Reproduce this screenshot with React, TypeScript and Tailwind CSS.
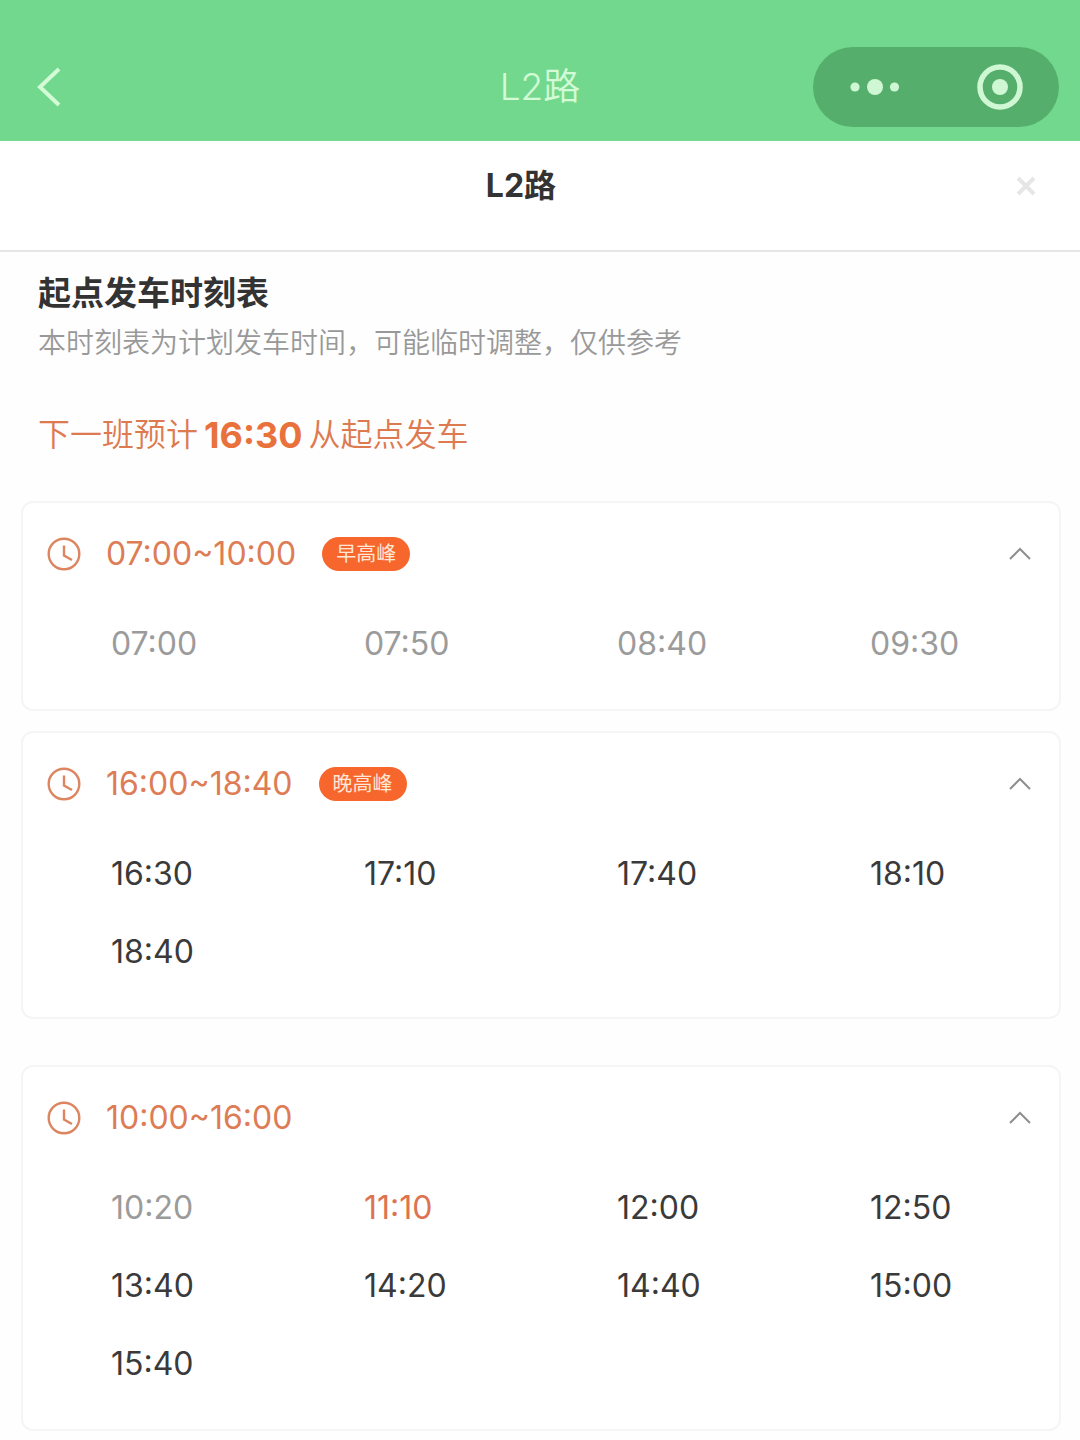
import { useState } from "react"
import clsx from "clsx"

type Status = "past" | "next" | "upcoming"

interface Departure {
    time: string
    status: Status
}

interface Period {
    range: string
    tag?: string
    departures: Departure[]
}

const toDepartures = (status: Status, times: string[]): Departure[] =>
    times.map((time) => ({ time, status }))

const peakPeriods: Period[] = [
    {
        range: "07:00~10:00",
        tag: "早高峰",
        departures: toDepartures("past", ["07:00", "07:50", "08:40", "09:30"]),
    },
    {
        range: "16:00~18:40",
        tag: "晚高峰",
        departures: toDepartures("upcoming", ["16:30", "17:10", "17:40", "18:10", "18:40"]),
    },
]

const offPeakPeriods: Period[] = [
    {
        range: "10:00~16:00",
        departures: [
            { time: "10:20", status: "past" },
            { time: "11:10", status: "next" },
            ...toDepartures("upcoming", ["12:00", "12:50", "13:40", "14:20", "14:40", "15:00", "15:40"]),
        ],
    },
]

const ClockIcon = () => (
    <svg viewBox="0 0 34 34" className="size-[34px] shrink-0" fill="none" stroke="#dc8560" strokeWidth="2.4" aria-hidden="true">
        <circle cx="17" cy="17" r="15.3" />
        <path d="M17 8.500v10l8 4.500" />
    </svg>
)

const PeriodCard = ({ period }: { period: Period }) => {
    const [open, setOpen] = useState(true)

    return (
        <section className="rounded-xl border-2 border-[#f5f5f5] bg-white">
            <button
                type="button"
                aria-expanded={open}
                onClick={() => setOpen(!open)}
                className="flex h-[102px] w-full items-center pl-6 pr-7 text-left"
            >
                <ClockIcon />
                <span className="ml-[25px] text-[32px] leading-10 text-[#dd7c55]">{period.range}</span>
                {period.tag && (
                    <span className="ml-[26px] flex h-[34px] items-center rounded-full bg-[#f7662c] px-[14px] text-[20px] text-[#ffe6d6]">
                        {period.tag}
                    </span>
                )}
                <svg
                    viewBox="0 0 22 14"
                    className={clsx("ml-auto h-[14px] w-[22px]", !open && "rotate-180")}
                    fill="none"
                    stroke="#8e8e8e"
                    strokeWidth="2"
                    aria-hidden="true"
                >
                    <path d="M1 12 11 2l10 10" />
                </svg>
            </button>

            {open && (
                <ul className="grid grid-cols-4 pb-[26px] pl-6">
                    {period.departures.map(({ time, status }) => (
                        <li
                            key={time}
                            className={clsx(
                                "flex h-[78px] items-center pl-16 text-[32px]",
                                status === "past" && "text-[#9b9b9b]",
                                status === "next" && "text-[#dd7350]",
                                status === "upcoming" && "text-[#3a3a3a]"
                            )}
                        >
                            {time}
                        </li>
                    ))}
                </ul>
            )}
        </section>
    )
}

export default function App() {
    return (
        <div className="min-h-screen bg-[#fefefe] font-['Inter','Noto_Sans_CJK_SC',sans-serif]">
            {/* Mini program nav bar */}
            <header className="grid h-[141px] grid-cols-3 items-center bg-[#72d88d] pt-8">
                <button type="button" aria-label="返回" className="ml-8 w-9">
                    <svg viewBox="0 0 36 44" className="h-11 w-9" fill="none" stroke="#d3fbd6" strokeWidth="4" aria-hidden="true">
                        <path d="M27 4 8 22l19 18" />
                    </svg>
                </button>
                <span className="text-center text-[37px] font-[350] text-[#d3fbd6]">L2路</span>
                <div className="mr-[21px] flex h-20 w-[246px] items-center justify-between justify-self-end rounded-full bg-[#55ae6c] pl-9 pr-9">
                    <button type="button" aria-label="更多">
                        <svg viewBox="0 0 52 18" className="h-[18px] w-[52px]" fill="#d0f7d3" aria-hidden="true">
                            <circle cx="6" cy="9" r="4.6" />
                            <circle cx="26" cy="9" r="8" />
                            <circle cx="45.5" cy="9" r="4.6" />
                        </svg>
                    </button>
                    <button type="button" aria-label="关闭小程序">
                        <svg viewBox="0 0 46 46" className="size-[46px]" aria-hidden="true">
                            <circle cx="23" cy="23" r="20" fill="none" stroke="#d0f7d3" strokeWidth="5.5" />
                            <circle cx="23" cy="23" r="8" fill="#d0f7d3" />
                        </svg>
                    </button>
                </div>
            </header>

            <div className="flex items-center border-b-2 border-[#e6e6e6] bg-white pb-10 pl-[38px] pr-8 pt-[21px]">
                <h1 className="flex-1 text-center text-[32px] font-bold leading-[48px] text-[#333333]">L2路</h1>
                <button type="button" aria-label="关闭" className="flex w-11 justify-center">
                    <svg viewBox="0 0 20 20" className="size-5" stroke="#e6e6e6" strokeWidth="4" aria-hidden="true">
                        <path d="m2 2 16 16M18 2 2 18" />
                    </svg>
                </button>
            </div>

            <main className="pb-[9px] pl-[21px] pr-[19px] pt-[21px]">
                <div className="px-[17px]">
                    <h2 className="text-[33px] font-bold leading-10 text-[#333333]">起点发车时刻表</h2>
                    <p className="mt-[10px] text-[28px] font-[350] leading-10 text-[#999999]">
                        本时刻表为计划发车时间，可能临时调整，仅供参考
                    </p>
                    <p className="mt-12 flex items-center gap-[6px] text-[32px] font-[350] leading-[48px] text-[#dd7a50]">
                        下一班预计
                        <strong className="text-[36px] font-bold text-[#e8713c]">16:30</strong>
                        从起点发车
                    </p>
                </div>

                <div className="mt-[42px] flex flex-col gap-5">
                    {peakPeriods.map((period) => (
                        <PeriodCard key={period.range} period={period} />
                    ))}
                </div>
                <div className="mt-[46px] flex flex-col gap-5">
                    {offPeakPeriods.map((period) => (
                        <PeriodCard key={period.range} period={period} />
                    ))}
                </div>
            </main>
        </div>
    )
}
